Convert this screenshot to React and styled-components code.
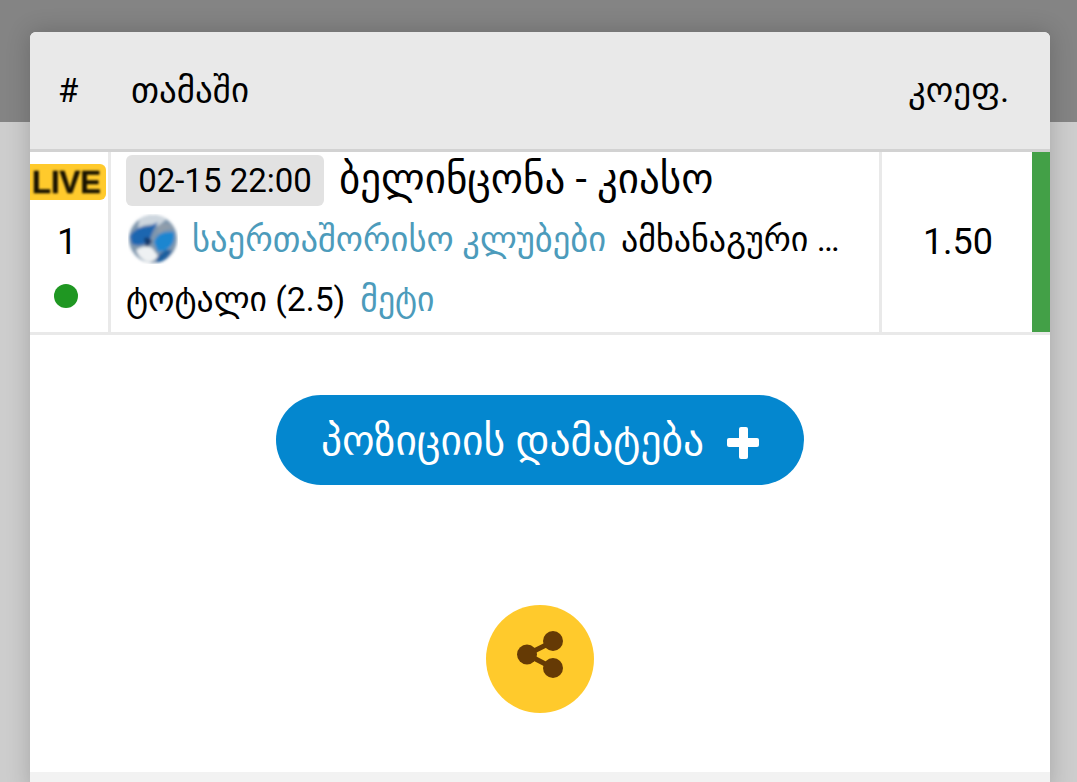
import React from 'react';
import styled, { createGlobalStyle } from 'styled-components';

const GlobalStyle = createGlobalStyle`
  html, body {
    margin: 0;
    padding: 0;
    height: 100%;
    overflow: hidden;
    background: #cdcdcd;
    font-family: Roboto, 'DejaVu Sans', sans-serif;
    color: #000;
  }
  *, *::before, *::after {
    box-sizing: border-box;
  }
`;

const Page = styled.div`
  position: relative;
  width: 1077px;
  height: 782px;
  overflow: hidden;
`;

const TopBar = styled.div`
  height: 122px;
  background: #848484;
`;

const Modal = styled.div`
  position: absolute;
  left: 30px;
  top: 32px;
  width: 1020px;
  height: 760px;
  background: #fff;
  border-radius: 6px 6px 0 0;
  box-shadow: 0 0 24px rgba(0, 0, 0, 0.2);
  display: flex;
  flex-direction: column;
`;

const HeaderRow = styled.div`
  height: 120px;
  flex: none;
  display: flex;
  align-items: center;
  background: #e9e9e9;
  border-bottom: 3px solid #d2d2d2;
  border-radius: 6px 6px 0 0;
  font-size: 35px;
`;

const HeadHash = styled.div`
  width: 101px;
  padding-left: 28px;
  font-size: 33px;
`;

const HeadGame = styled.div`
  flex: 1;
`;

const HeadOdds = styled.div`
  width: 142px;
`;

const GameRow = styled.div`
  height: 183px;
  flex: none;
  display: flex;
  border-bottom: 3px solid #e9e9e9;
`;

const NumberCell = styled.div`
  width: 81px;
  flex: none;
  border-right: 3px solid #e9e9e9;
  display: flex;
  flex-direction: column;
  align-items: flex-start;
  padding-top: 12px;
`;

const LiveBadge = styled.div`
  width: 76px;
  height: 36px;
  background: #ffca2c;
  border-radius: 0 6px 6px 0;
  display: flex;
  align-items: center;
  justify-content: center;
  font-family: 'Liberation Sans', sans-serif;
  font-weight: 700;
  font-size: 31px;
  line-height: 1;
  color: #171100;
  overflow: hidden;

  span {
    filter: blur(1.2px);
    -webkit-text-stroke: 0.5px #171100;
    margin-left: -3px;
  }
`;

const RowNumber = styled.div`
  width: 74px;
  margin-top: 20px;
  text-align: center;
  font-size: 36px;
  line-height: 44px;
`;

const StatusDot = styled.div`
  width: 24px;
  height: 24px;
  margin: 20px 0 0 24px;
  border-radius: 50%;
  background: #1f9722;
`;

const InfoCell = styled.div`
  width: 771px;
  flex: none;
  border-right: 3px solid #e9e9e9;
  padding: 3px 0 0 15px;
  display: flex;
  flex-direction: column;
`;

const InfoLine = styled.div`
  display: flex;
  align-items: center;
  white-space: nowrap;
  font-size: ${(p) => p.$size}px;
  height: ${(p) => p.$height}px;
`;

const TitleText = styled.span`
  padding-bottom: 4px;
`;

const DateChip = styled.span`
  background: #e2e2e2;
  border-radius: 6px;
  height: 51px;
  width: 198px;
  display: flex;
  align-items: center;
  justify-content: center;
  font-size: 33px;
  margin-right: 15px;
`;

const LeagueLogo = styled.svg`
  width: 50px;
  height: 50px;
  flex: none;
  margin: 0 14px 0 2px;
`;

const LinkText = styled.span`
  color: #4c9bbb;
  margin-left: ${(p) => p.$gap || 0}px;
`;

const LeagueName = styled.span`
  margin-left: 15px;
  font-size: 34px;
`;

const OddsCell = styled.div`
  flex: 1;
  display: flex;
  align-items: center;
  justify-content: center;
  font-size: 36px;
  padding-left: 2px;
`;

const ResultBar = styled.div`
  width: 18px;
  flex: none;
  background: #43a047;
`;

const Actions = styled.div`
  flex: 1;
  display: flex;
  flex-direction: column;
  align-items: center;
  padding-top: 60px;
`;

const AddButton = styled.button`
  width: 528px;
  height: 90px;
  border: none;
  border-radius: 45px;
  background: #0487cf;
  color: #fff;
  font-family: inherit;
  font-size: 41.500px;
  display: flex;
  align-items: center;
  justify-content: center;
  gap: 23px;
  padding: 0;

  svg {
    margin-top: 5px;
  }
`;

const ShareButton = styled.button`
  width: 108px;
  height: 108px;
  margin-top: 120px;
  border: none;
  border-radius: 50%;
  background: #ffca2c;
  display: flex;
  align-items: center;
  justify-content: center;
  padding: 0 0 9px;
`;

const FooterStrip = styled.div`
  height: 20px;
  margin-top: auto;
  flex: none;
  align-self: stretch;
  background: #f2f2f2;
`;

const PlusIcon = () => (
  <svg width="32" height="32" viewBox="0 0 32 32">
    <rect x="12" y="0" width="9" height="32" rx="2" fill="#fff" />
    <rect x="0" y="11" width="32" height="9" rx="2" fill="#fff" />
  </svg>
);

const ShareIcon = () => (
  <svg width="48" height="48" viewBox="0 0 48 48">
    <path d="M11 23.500 L37 10.500 M11 23.500 L37 37" stroke="#653a05" strokeWidth="5" fill="none" />
    <circle cx="11" cy="23.500" r="10" fill="#653a05" />
    <circle cx="37" cy="10" r="10" fill="#653a05" />
    <circle cx="37" cy="37" r="10" fill="#653a05" />
  </svg>
);

const Logo = () => (
  <LeagueLogo viewBox="0 0 50 50">
    <defs>
      <filter id="soft" x="-10%" y="-10%" width="120%" height="120%">
        <feGaussianBlur stdDeviation="1.800" />
      </filter>
      <clipPath id="disc">
        <circle cx="25" cy="25" r="24" />
      </clipPath>
    </defs>
    <g filter="url(#soft)">
      <g clipPath="url(#disc)">
        <rect width="50" height="50" fill="#7f97ae" />
        <path d="M12 2 Q26 -2 40 4 L30 12 Q20 8 10 14 Z" fill="#cdd6de" />
        <path d="M2 22 Q8 12 22 12 L30 8 Q24 18 22 26 Q14 34 4 30 Z" fill="#1f66b0" />
        <path d="M16 24 Q22 22 24 28 L18 34 Z" fill="#123a6e" />
        <path d="M26 28 Q30 16 46 18 Q48 30 38 36 L30 38 Z" fill="#1c86d0" />
        <path d="M8 36 Q16 30 24 34 L30 42 Q26 48 20 48 Q12 46 8 36 Z" fill="#eef1f3" />
        <path d="M30 12 Q38 6 46 14 Q36 14 30 20 Z" fill="#8f9caa" />
        <path d="M28 46 Q32 38 38 36 L44 36 Q40 46 30 50 Z" fill="#1a5e9e" />
      </g>
    </g>
  </LeagueLogo>
);

export default function App() {
  return (
    <Page>
      <GlobalStyle />
      <TopBar />
      <Modal>
        <HeaderRow>
          <HeadHash>#</HeadHash>
          <HeadGame>თამაში</HeadGame>
          <HeadOdds>კოეფ.</HeadOdds>
        </HeaderRow>
        <GameRow>
          <NumberCell>
            <LiveBadge><span>LIVE</span></LiveBadge>
            <RowNumber>1</RowNumber>
            <StatusDot />
          </NumberCell>
          <InfoCell>
            <InfoLine $height={51} $size={41}>
              <DateChip>02-15 22:00</DateChip>
              <TitleText>ბელინცონა - კიასო</TitleText>
            </InfoLine>
            <InfoLine $height={66} $size={34.6}>
              <Logo />
              <LinkText>საერთაშორისო კლუბები</LinkText>
              <LeagueName>ამხანაგური …</LeagueName>
            </InfoLine>
            <InfoLine $height={54} $size={33.7}>
              ტოტალი (2.5)
              <LinkText $gap={15}>მეტი</LinkText>
            </InfoLine>
          </InfoCell>
          <OddsCell>1.50</OddsCell>
          <ResultBar />
        </GameRow>
        <Actions>
          <AddButton>
            პოზიციის დამატება
            <PlusIcon />
          </AddButton>
          <ShareButton><ShareIcon /></ShareButton>
          <FooterStrip />
        </Actions>
      </Modal>
    </Page>
  );
}
